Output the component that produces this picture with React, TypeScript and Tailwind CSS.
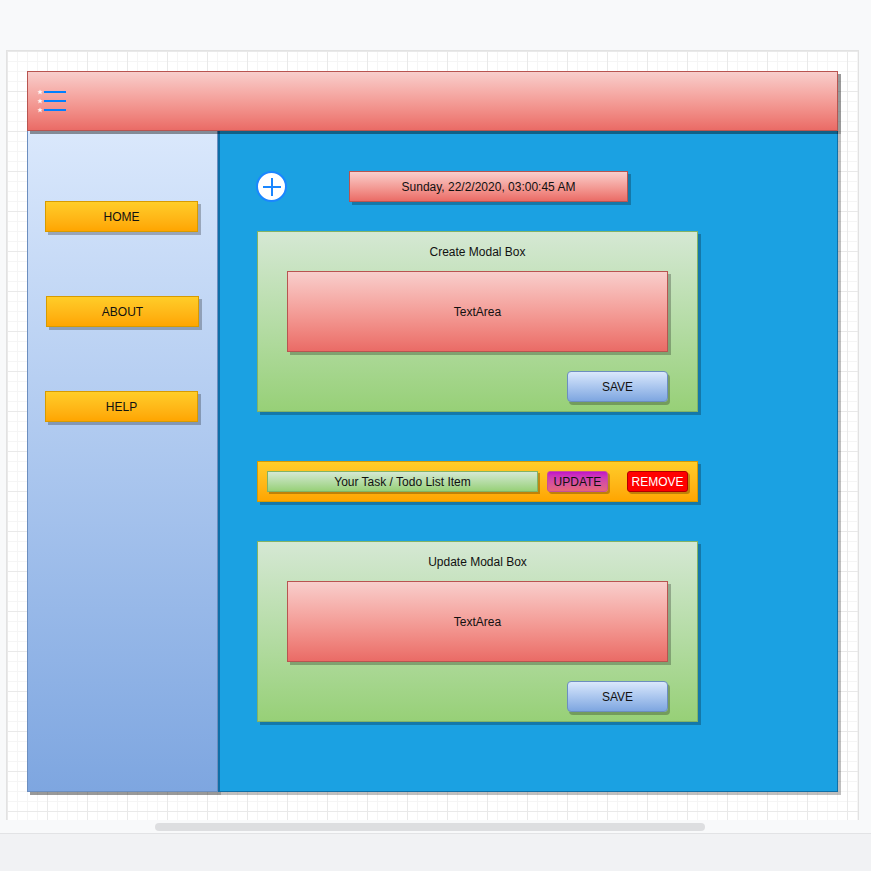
import React from 'react';

const font = "font-['Liberation_Sans',Arial,sans-serif]";

function SideButton({ label, offset }: { label: string; offset?: boolean }) {
  return (
    <div
      className={`w-[153px] h-[31px] flex items-center justify-center text-[12px] text-[#111] border border-[#d79b00] bg-gradient-to-b from-[#ffcd28] to-[#ffa500] shadow-[3px_3px_0_rgba(0,0,0,0.25)] ${
        offset ? 'ml-[18px]' : 'ml-[17px]'
      }`}
    >
      {label}
    </div>
  );
}

function ModalBox({ title }: { title: string }) {
  return (
    <div className="w-[441px] h-[181px] flex flex-col border border-[#82b366] bg-gradient-to-b from-[#d5e8d4] to-[#97d077] shadow-[3px_3px_0_rgba(0,0,0,0.25)]">
      <div className="h-[39px] flex items-center justify-center text-[12px] text-[#111] pt-[1px]">{title}</div>
      <div className="ml-[29px] w-[381px] h-[81px] flex items-center justify-center text-[12px] text-[#111] border border-[#b85450] bg-gradient-to-b from-[#f8cecc] to-[#ea6b66] shadow-[3px_3px_0_rgba(0,0,0,0.25)]">
        TextArea
      </div>
      <div className="flex justify-end pr-[29px] mt-[19px]">
        <div className="w-[101px] h-[31px] rounded-[4px] flex items-center justify-center text-[12px] text-[#111] border border-[#6c8ebf] bg-gradient-to-b from-[#dae8fc] to-[#7ea6e0] shadow-[2px_3px_0_rgba(0,0,0,0.25)]">
          SAVE
        </div>
      </div>
    </div>
  );
}

export default function App() {
  return (
    <div className={`w-[871px] h-[871px] bg-[#f8f9fa] flex flex-col ${font}`}>
      <div className="h-[50px]" />
      {/* Canvas */}
      <div className="ml-[6px] w-[853px] h-[770px] border-l border-t border-r border-[#e2e2e2] bg-white bg-[image:linear-gradient(to_right,#e9e9e9_1px,transparent_1px),linear-gradient(to_bottom,#e9e9e9_1px,transparent_1px),linear-gradient(to_right,#f5f5f5_1px,transparent_1px),linear-gradient(to_bottom,#f5f5f5_1px,transparent_1px)] bg-[size:40px_40px,40px_40px,10px_10px,10px_10px] pt-[20px] pl-[20px]">
        {/* Header */}
        <div className="w-[811px] h-[60px] border border-[#b85450] bg-gradient-to-b from-[#f8cecc] to-[#ea6b66] shadow-[3px_3px_0_rgba(0,0,0,0.4)] flex items-center pl-[9px] relative z-10">
          <svg width="30" height="24" viewBox="0 0 30 24" className="-mt-[1px]">
            {[3, 12, 21].map((y) => (
              <g key={y}>
                <polygon
                  points={`3,${y - 2.6} 3.8,${y - 0.8} 5.7,${y - 0.8} 4.2,${y + 0.4} 4.8,${y + 2.4} 3,${y + 1.2} 1.2,${y + 2.4} 1.8,${y + 0.4} 0.3,${y - 0.8} 2.2,${y - 0.8}`}
                  fill="#fff4f4"
                />
                <rect x="7" y={y - 1} width="22" height="2" fill="#007fff" />
              </g>
            ))}
          </svg>
        </div>
        <div className="flex">
          {/* Sidebar */}
          <div className="w-[191px] h-[661px] border border-t-0 border-[#6c8ebf] bg-gradient-to-b from-[#dae8fc] to-[#7ea6e0] shadow-[3px_3px_0_rgba(0,0,0,0.4)] flex flex-col pt-[70px] gap-[64px]">
            <SideButton label="HOME" />
            <SideButton label="ABOUT" offset />
            <SideButton label="HELP" />
          </div>
          {/* Main */}
          <div className="w-[620px] h-[661px] border border-t-0 border-l-2 border-[#0e6fa8] bg-[#1ba1e2] shadow-[3px_3px_0_rgba(0,0,0,0.25)] flex flex-col pt-[40px] pl-[36px]">
            <div className="flex items-start h-[31px]">
              <div className="w-[31px] h-[31px] rounded-full bg-white border-2 border-[#1a86ff] flex items-center justify-center">
                <svg width="20" height="20" viewBox="0 0 20 20">
                  <rect x="1" y="9" width="18" height="2" fill="#1a86ff" />
                  <rect x="9" y="1" width="2" height="18" fill="#1a86ff" />
                </svg>
              </div>
              <div className="ml-[62px] w-[279px] h-[31px] flex items-center justify-center text-[12px] text-[#111] border border-[#b85450] bg-gradient-to-b from-[#f8cecc] to-[#ea6b66] shadow-[3px_3px_0_rgba(0,0,0,0.25)]">
                Sunday, 22/2/2020, 03:00:45 AM
              </div>
            </div>
            <div className="mt-[29px] ml-[1px]">
              <ModalBox title="Create Modal Box" />
            </div>
            {/* Task row */}
            <div className="mt-[49px] ml-[1px] w-[441px] h-[41px] border border-[#d79b00] bg-gradient-to-b from-[#ffcd28] to-[#ffa500] shadow-[3px_3px_0_rgba(0,0,0,0.25)] flex items-center pl-[9px]">
              <div className="w-[271px] h-[21px] flex items-center justify-center text-[12px] text-[#111] border border-[#82b366] bg-gradient-to-b from-[#d5e8d4] to-[#97d077] shadow-[2px_2px_0_rgba(0,0,0,0.25)]">
                Your Task / Todo List Item
              </div>
              <div className="ml-[9px] w-[61px] h-[21px] rounded-[3px] flex items-center justify-center text-[12px] text-[#111] border border-[#c4509a] bg-gradient-to-b from-[#c40fc8] to-[#e6667a] shadow-[2px_2px_0_rgba(0,0,0,0.25)]">
                UPDATE
              </div>
              <div className="ml-[19px] w-[61px] h-[21px] rounded-[3px] flex items-center justify-center text-[12px] text-white border border-[#b20000] bg-[#ff0000] shadow-[2px_2px_0_rgba(0,0,0,0.25)]">
                REMOVE
              </div>
            </div>
            <div className="mt-[39px] ml-[1px]">
              <ModalBox title="Update Modal Box" />
            </div>
          </div>
        </div>
      </div>
      {/* Scrollbar */}
      <div className="h-[13px] bg-[#f8f9fa] pt-[3px] pl-[155px]">
        <div className="w-[550px] h-[8px] rounded-full bg-[#dddee0]" />
      </div>
      <div className="flex-1 border-t border-[#e2e3e5] bg-[#f1f2f4]" />
    </div>
  );
}
